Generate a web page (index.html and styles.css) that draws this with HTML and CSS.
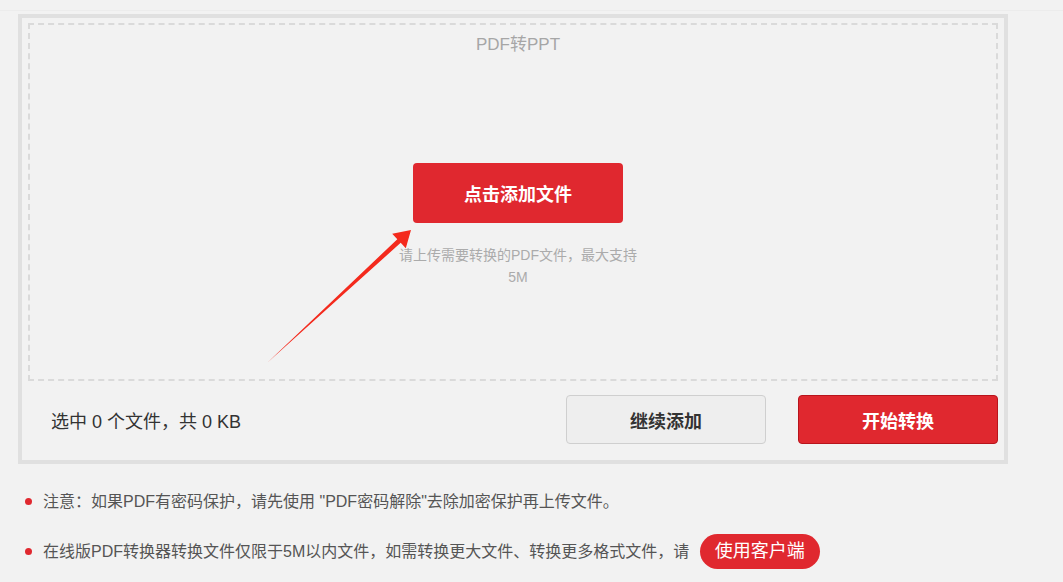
FILE: index.html
```html
<!DOCTYPE html>
<html lang="zh-CN">
<head>
    <meta charset="UTF-8" />
    <meta name="viewport" content="width=device-width, initial-scale=1">
    <title>PDF转PPT</title>
    <link rel="stylesheet" href="styles.css">
</head>
<body>

    <section class="page">
        <div class="converter">
            <div class="drop">
                <div class="drop-title">PDF转PPT</div>
                <button class="btn-add">点击添加文件</button>
                <p class="drop-tip">请上传需要转换的PDF文件，最大支持5M</p>

                <svg class="arrow" width="160" height="145" viewBox="0 0 160 145">
                    <polygon points="7,138 137.3,14.2 132.2,8.7 151,5 145.8,23.3 140.7,17.8" fill="#f42a1d" />
                </svg>
            </div>

            <div class="actions">
                <span class="count">选中 0 个文件，共 0 KB</span>
                <div class="buttons">
                    <button class="btn btn-more">继续添加</button>
                    <button class="btn btn-start">开始转换</button>
                </div>
            </div>
        </div>

        <ul class="notes">
            <li>注意：如果PDF有密码保护，请先使用 "PDF密码解除"去除加密保护再上传文件。</li>
            <li>在线版PDF转换器转换文件仅限于5M以内文件，如需转换更大文件、转换更多格式文件，请 <a class="client" href="#">使用客户端</a></li>
        </ul>
    </section>

</body>
</html>
```

FILE: styles.css
```css
html,
body {
    padding: 0;
    margin: 0;
    height: 100%;
}
body {
    background: #f2f2f2;
    font-family: "Liberation Sans", "Noto Sans CJK SC", sans-serif;
    color: #333;
}
.page {
    margin-top: 10px;
    border-top: 1px solid #ececec;
    padding-top: 3px;
}
.converter {
    width: 970px;
    margin-left: 18px;
    border: 4px solid #e0e0e0;
    padding: 5px 6px 0;
}
.drop {
    position: relative;
    height: 354px;
    padding-left: 10px;
    border: 2px dashed #dadada;
    text-align: center;
}
.drop-title {
    margin-top: 10px;
    font-size: 17px;
    line-height: 20px;
    color: #a6a6a6;
}
.btn-add {
    display: block;
    width: 210px;
    height: 60px;
    margin: 108px auto 0;
    border: 0;
    border-radius: 4px;
    background: #e0282f;
    color: #fff;
    font-family: inherit;
    font-size: 18px;
    font-weight: bold;
    cursor: pointer;
}
.drop-tip {
    width: 244px;
    margin: 21px auto 0;
    font-size: 14px;
    line-height: 22px;
    color: #ababab;
}
.arrow {
    position: absolute;
    left: 230px;
    top: 200px;
}
.actions {
    display: flex;
    align-items: center;
    justify-content: space-between;
    padding: 14px 0 16px 23px;
}
.count {
    font-size: 18px;
    color: #333;
}
.buttons {
    display: flex;
    gap: 32px;
}
.btn {
    width: 200px;
    height: 49px;
    border-radius: 4px;
    font-family: inherit;
    font-size: 18px;
    font-weight: bold;
    cursor: pointer;
}
.btn-more {
    background: #eeeeee;
    border: 1px solid #cfcfcf;
    color: #333;
}
.btn-start {
    background: #e0282f;
    border: 1px solid #b8141c;
    color: #fff;
}
.notes {
    list-style: none;
    margin: 20px 0 0;
    padding: 0 0 0 43px;
}
.notes li {
    position: relative;
    height: 35px;
    line-height: 35px;
    margin-bottom: 15px;
    font-size: 16px;
    color: #555;
}
.notes li:before {
    content: "";
    position: absolute;
    left: -18px;
    top: 14px;
    width: 7px;
    height: 7px;
    border-radius: 50%;
    background: #e0282f;
}
.client {
    display: inline-block;
    width: 120px;
    height: 35px;
    margin-left: 6px;
    border-radius: 18px;
    background: #e0282f;
    color: #fff;
    font-size: 18px;
    line-height: 35px;
    text-align: center;
    text-decoration: none;
    vertical-align: top;
}
```
